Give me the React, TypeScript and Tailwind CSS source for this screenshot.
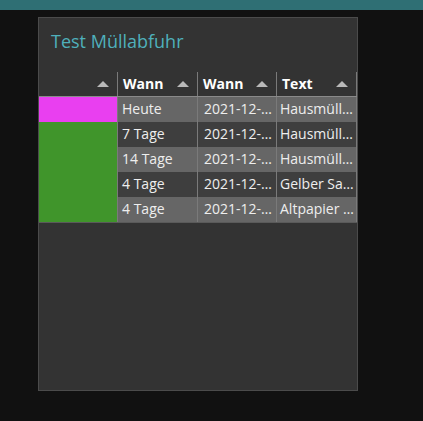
import { ReactNode } from "react";

type Row = { color: string; wann: string; date: string; text: string };

const rows: Row[] = [
  { color: "bg-[#e93ff0]", wann: "Heute", date: "2021-12-17", text: "Hausmüll (2-wöchentlich)" },
  { color: "bg-[#40952b]", wann: "7 Tage", date: "2021-12-24", text: "Hausmüll (2-wöchentlich)" },
  { color: "bg-[#40952b]", wann: "14 Tage", date: "2021-12-31", text: "Hausmüll (2-wöchentlich)" },
  { color: "bg-[#40952b]", wann: "4 Tage", date: "2021-12-21", text: "Gelber Sack" },
  { color: "bg-[#40952b]", wann: "4 Tage", date: "2021-12-21", text: "Altpapier Tonne" },
];

function SortArrow() {
  return (
    <svg width="12" height="6" viewBox="0 0 12 6" className="shrink-0">
      <path d="M0 6 L6 0 L12 6 Z" fill="#b9b9b9" />
    </svg>
  );
}

function HeadCell({ children, w }: { children?: ReactNode; w: string }) {
  return (
    <div className={`${w} h-full flex items-center justify-between pl-[5px] pr-[8px] border-r border-[#7a7a7a]`}>
      <span className="font-bold text-[14px] text-white">{children}</span>
      <SortArrow />
    </div>
  );
}

export default function App() {
  return (
    <div className="min-h-[421px] bg-[#111111] font-['Open_Sans',sans-serif]">
      <div className="h-[10px] bg-[#2f6f74]" />
      <div className="ml-[38px] mt-[7px] w-[320px] h-[374px] bg-[#333333] border border-[#4b4b4b] flex flex-col">
        <div className="pl-[12px] pt-[11px] h-[54px] text-[18px] leading-[24px] text-[#4fb0bb]">
          Test Müllabfuhr
        </div>
        <div className="w-[318px] text-[14px] leading-[24px] text-[#eeeeee]">
          <div className="flex h-[25px] border-b border-[#8a8a8a]">
            <HeadCell w="w-[79px]" />
            <HeadCell w="w-[80px]">Wann</HeadCell>
            <HeadCell w="w-[79px]">Wann</HeadCell>
            <HeadCell w="w-[80px]">Text</HeadCell>
          </div>
          {rows.map((r, i) => {
            const bg = i % 2 === 0 ? "bg-[#666666]" : "bg-[#3e3e3e]";
            return (
              <div key={i} className={`flex h-[25px] ${bg}`}>
                <div className={`w-[79px] h-full ${r.color} border-r border-[#7a7a7a]`} />
                <div className="w-[80px] h-full pl-[4px] pr-[2px] truncate border-r border-[#7a7a7a]">{r.wann}</div>
                <div className="w-[79px] h-full pl-[6px] pr-[2px] truncate border-r border-[#7a7a7a]">{r.date}</div>
                <div className="w-[80px] h-full pl-[3px] pr-[2px] truncate border-r border-[#7a7a7a]">{r.text}</div>
              </div>
            );
          })}
          <div className="h-px w-[318px] bg-[#5a5a5a]" />
        </div>
      </div>
    </div>
  );
}
